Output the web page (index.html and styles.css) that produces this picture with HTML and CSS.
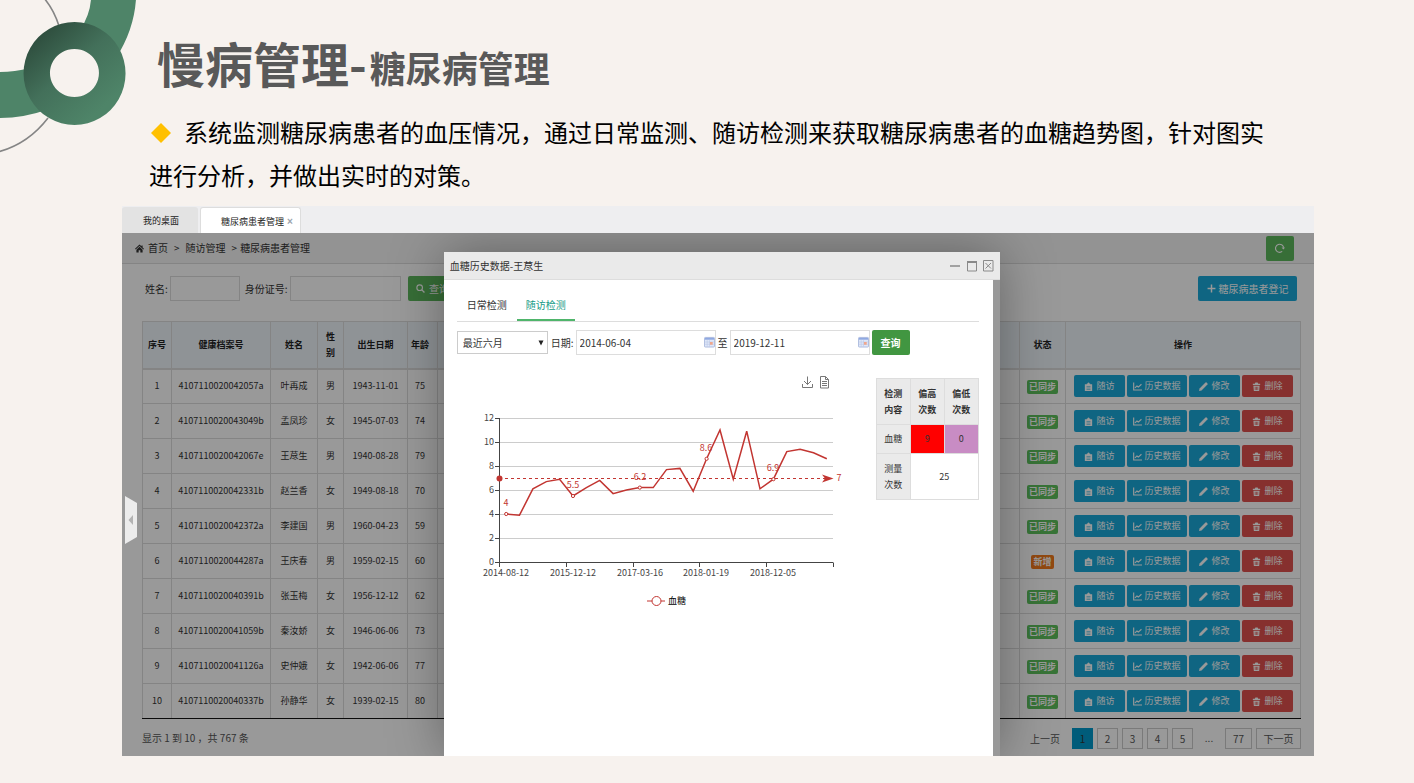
FILE: index.html
```html
<!DOCTYPE html>
<html lang="zh-CN">
<head>
<meta charset="utf-8">
<title>慢病管理-糖尿病管理</title>
<link rel="stylesheet" href="styles.css">
</head>
<body>
<svg class="sprite" aria-hidden="true">
  <symbol id="i-home" viewBox="0 0 16 16"><path d="M8 1 0 8.500l1.200 1.200L8 3.600l6.800 6.100L16 8.500 13.500 6.100V2.500h-2V4.200zM8 5 2.500 10v5h4v-4h3v4h4v-5z"/></symbol>
  <symbol id="i-search" viewBox="0 0 16 16"><circle cx="6.500" cy="6.500" r="5" fill="none" stroke="currentColor" stroke-width="2"/><path d="m10 10 5 5" stroke="currentColor" stroke-width="2.400"/></symbol>
  <symbol id="i-refresh" viewBox="0 0 16 16"><path d="M11.500 13.500a6.500 6.500 0 1 1 2.300-6" fill="none" stroke="currentColor" stroke-width="1.800"/><path d="M10.500 7h5.500l-2.600 3.500z"/></symbol>
  <symbol id="i-plus" viewBox="0 0 16 16"><path d="M6.700 1h2.600v5.700H15v2.600H9.300V15H6.700V9.300H1V6.700h5.700z"/></symbol>
  <symbol id="i-clip" viewBox="0 0 16 16"><path d="M1.500 4h3.500V2.500h1.500a1.500 1.500 0 0 1 3 0H11V4h3.500v12h-13zm3 3.500v1h7v-1zm0 2.500v1h7v-1zm0 2.500v1h7v-1z" fill-rule="evenodd"/></symbol>
  <symbol id="i-line" viewBox="0 0 16 16"><path d="M1.200 1v13.300H16M3.500 10.500 7 7l2.500 2L15 4" fill="none" stroke="currentColor" stroke-width="2"/></symbol>
  <symbol id="i-pen" viewBox="0 0 16 16"><path d="m0 16 1-4.500L11.500 1q1-1 2 0L15 2.500q1 1 0 2L4.500 15z"/></symbol>
  <symbol id="i-trash" viewBox="0 0 16 16"><path d="M1.500 3H5q.5-2 1.500-2h3q1 0 1.500 2h3.500v2.500h-13zM2.500 6.500h11l-.8 9.500H3.300zM5 8.500v5.500h1.200V8.500zm2.400 0v5.500h1.200V8.500zm2.400 0v5.500H11V8.500z" fill-rule="evenodd"/></symbol>
  <symbol id="i-cal" viewBox="0 0 12 12"><rect x=".5" y="1" width="11" height="10.500" rx="1" fill="#dfe7f8" stroke="#a9b8dc"/><path d="M1 1.500h10v2H1z" fill="#8fa9e2"/><path d="M3.500 4v7M6 4v7M1 6h10M1 8.500h10" stroke="#b9c6e6" stroke-width=".6"/><rect x="6.500" y="6" width="3" height="3" fill="#f0a68c"/></symbol>
</svg>

<main class="slide">
  <svg class="deco" viewBox="0 0 140 156" aria-hidden="true">
    <defs><linearGradient id="ring" x1="0.100" y1="0.100" x2="0.750" y2="0.850"><stop offset="0" stop-color="#2c4a3b"/><stop offset=".5" stop-color="#43705a"/><stop offset="1" stop-color="#4e8468"/></linearGradient></defs>
    <path d="M44 -2Q54 10 59 26M48 118Q28 144 -2 152" fill="none" stroke="#858585" stroke-width="1.600"/>
    <path d="M91 -1H136Q134 30 116 58L80 30Q90 15 91 -1zM-1 72Q14 72 30 68L46 110Q24 118 -1 118z" fill="#4e8468"/>
    <path d="M74.500 22a51 51.500 0 1 0 .1 0zm0 27a24.500 24 0 1 1-.1 0z" fill="url(#ring)" fill-rule="evenodd"/>
  </svg>
  <h1 class="title">慢病管理-<small>糖尿病管理</small></h1>
  <p class="lead"><svg class="diamond" viewBox="0 0 20 20" aria-hidden="true"><path d="M10 0 20 10 10 20 0 10z"/></svg>系统监测糖尿病患者的血压情况，通过日常监测、随访检测来获取糖尿病患者的血糖趋势图，针对图实进行分析，并做出实时的对策。</p>

  <section class="app">
    <nav class="tabs">
      <a class="tab" href="#">我的桌面</a>
      <a class="tab tab-on" href="#">糖尿病患者管理<span class="tab-x">×</span></a>
    </nav>
    <div class="stage">
      <div class="crumbs">
        <span class="trail"><svg class="ico ico-home"><use href="#i-home"/></svg><a href="#">首页</a><i>&gt;</i><a href="#">随访管理</a><i>&gt;</i></span><span>糖尿病患者管理</span>
        <button class="btn btn-green btn-refresh" aria-label="刷新"><svg class="ico"><use href="#i-refresh"/></svg></button>
      </div>
      <div class="panel">
        <form class="search">
          <label for="nm">姓名:</label><input id="nm" class="box box-name" type="text">
          <label for="idn">身份证号:</label><input id="idn" class="box box-id" type="text">
          <button type="button" class="btn btn-green btn-find"><svg class="ico"><use href="#i-search"/></svg>查询</button>
          <button type="button" class="btn btn-blue btn-new"><svg class="ico"><use href="#i-plus"/></svg>糖尿病患者登记</button>
        </form>
        <table class="grid">
          <colgroup><col class="c-no"><col class="c-file"><col class="c-name"><col class="c-sex"><col class="c-date"><col class="c-age"><col><col class="c-state"><col class="c-ops"></colgroup>
          <thead><tr><th>序号</th><th>健康档案号</th><th>姓名</th><th>性<br>别</th><th>出生日期</th><th>年龄</th><th></th><th>状态</th><th>操作</th></tr></thead>
          <tbody id="rows"></tbody>
        </table>
        <div class="foot">
          <span>显示 1 到 10 ，共 767 条</span>
          <nav class="pager"><span class="prev">上一页</span><a class="on" href="#">1</a><a href="#">2</a><a href="#">3</a><a href="#">4</a><a href="#">5</a><span class="dots">...</span><a class="wide" href="#">77</a><a class="next" href="#">下一页</a></nav>
        </div>
      </div>
      <div class="mask"></div>
      <button class="handle" aria-label="展开侧栏"><svg viewBox="0 0 12 48"><path d="M0 0 12 7V41L0 48z" fill="#ececec"/><path d="M8 19v10L3.500 24z" fill="#b3b3b3"/></svg></button>

      <div class="modal" role="dialog" aria-label="血糖历史数据">
        <header class="modal-head"><span>血糖历史数据-王荩生</span>
          <svg class="win" viewBox="0 0 44 12" fill="none" stroke="#8a8a8a" aria-hidden="true"><path d="M0 6h10" stroke-width="1.500"/><path d="M17.500 1v10h9V1M17 1.500h10"/><path d="M17 2h10" stroke-width="2"/><path d="M33.500 .5h9.500v10.500h-9.500zM35.500 3l5.500 5.500M41 3l-5.500 5.500"/></svg>
        </header>
        <div class="modal-body">
          <nav class="subtabs"><a href="#">日常检测</a><a class="on" href="#">随访检测</a></nav>
          <form class="range">
            <select class="box period" aria-label="时间段"><option>最近六月</option></select><svg class="caret" viewBox="0 0 6 6" aria-hidden="true"><path d="M.5 .5h5L3 5.500z"/></svg>
            <label for="d1">日期:</label>
            <span class="date"><input id="d1" class="box" type="text" value="2014-06-04"><svg class="cal"><use href="#i-cal"/></svg></span>
            <label for="d2">至</label>
            <span class="date"><input id="d2" class="box" type="text" value="2019-12-11"><svg class="cal"><use href="#i-cal"/></svg></span>
            <button type="button" class="btn btn-query">查询</button>
          </form>
          <div class="report">
            <svg class="chart" viewBox="0 0 400 250" role="img" aria-label="血糖趋势图">
              <g fill="none" stroke="#777">
                <path d="M345.500 14v3.500h10V14M350.500 6.500v8M347 11l3.500 3.500L354 11"/>
                <path d="M363.500 6.500h5l3 3v8.500h-8zM368.500 6.500v3h3M365 11.500h5M365 13.500h5M365 15.500h5"/>
              </g>
              <path d="M42 48.500h334M42 72.500h334M42 96.500h334M42 120.500h334M42 144.500h334M42 168.500h334" stroke="#ccc"/>
              <path d="M42.500 48v145M38 48.500h4M38 72.500h4M38 96.500h4M38 120.500h4M38 144.500h4M38 168.500h4M38 192.500h338.500M42.500 193v4M109.500 193v4M176.500 193v4M242.500 193v4M309.500 193v4M376.500 193v4" stroke="#444" fill="none"/>
              <g class="axis" text-anchor="end"><text x="37" y="51">12</text><text x="37" y="75">10</text><text x="37" y="99">8</text><text x="37" y="123">6</text><text x="37" y="147">4</text><text x="37" y="171">2</text><text x="37" y="195">0</text></g>
              <g class="axis" text-anchor="middle"><text x="49" y="206">2014-08-12</text><text x="116" y="206">2015-12-12</text><text x="183" y="206">2017-03-16</text><text x="249" y="206">2018-01-19</text><text x="316" y="206">2018-12-05</text></g>
              <path d="M42 108.500h330" stroke="#c23531" stroke-dasharray="3 3"/>
              <circle cx="42.500" cy="108.500" r="3" fill="#c23531"/>
              <path d="M376.500 108.500 365 104.500l3 4-3 4z" fill="#c23531"/>
              <polyline fill="none" stroke="#c23531" stroke-width="1.500" points="49.200,144 62.500,145.200 75.900,118.800 89.300,111.600 102.600,109.200 116,126 129.400,117.600 142.700,110.400 156.100,123.600 169.400,120 182.800,117.600 196.200,117.600 209.500,99.600 222.900,98.400 236.200,121.200 249.600,88.800 263,60 276.300,109.200 289.700,61.200 303,118.800 316.400,109.200 329.800,81.600 343.100,79.200 356.500,82.800 369.800,88.800"/>
              <g fill="#fff" stroke="#c23531"><circle cx="49.200" cy="144" r="1.600"/><circle cx="116" cy="126" r="1.600"/><circle cx="182.800" cy="117.600" r="1.600"/><circle cx="249.600" cy="88.800" r="1.600"/><circle cx="316.400" cy="109.200" r="1.600"/></g>
              <g class="val" text-anchor="middle"><text x="49" y="136">4</text><text x="116" y="118">5.5</text><text x="183" y="110">6.2</text><text x="249" y="81">8.6</text><text x="316" y="101">6.9</text><text x="382" y="111">7</text></g>
              <path d="M190 231h18" stroke="#c23531"/><circle cx="199.500" cy="231" r="4.500" fill="#fff" stroke="#c23531"/>
              <text class="legend" x="211" y="234">血糖</text>
            </svg>
            <table class="stats">
              <tr><th>检测<br>内容</th><th>偏高<br>次数</th><th>偏低<br>次数</th></tr>
              <tr class="mid"><th class="plain">血糖</th><td class="high">9</td><td class="low">0</td></tr>
              <tr><th class="plain">测量<br>次数</th><td colspan="2">25</td></tr>
            </table>
          </div>
        </div>
      </div>
    </div>
  </section>
</main>
<script src="app.js"></script>
</body>
</html>
```
FILE: app.js
```js
const patients = [
  ["4107110020042057a", "叶再成", "男", "1943-11-01", 75],
  ["4107110020043049b", "孟凤珍", "女", "1945-07-03", 74],
  ["4107110020042067e", "王荩生", "男", "1940-08-28", 79],
  ["4107110020042331b", "赵兰香", "女", "1949-08-18", 70],
  ["4107110020042372a", "李建国", "男", "1960-04-23", 59],
  ["4107110020044287a", "王庆春", "男", "1959-02-15", 60, true],
  ["4107110020040391b", "张玉梅", "女", "1956-12-12", 62],
  ["4107110020041059b", "秦汝娇", "女", "1946-06-06", 73],
  ["4107110020041126a", "史仲娥", "女", "1942-06-06", 77],
  ["4107110020040337b", "孙静华", "女", "1939-02-15", 80]
];
const op = (kind, icon, text) =>
  `<button class="btn op ${kind}"><svg class="ico"><use href="#${icon}"/></svg>${text}</button>`;
const ops = `<div class="ops">${op("btn-blue", "i-clip", "随访")}${op("btn-blue op-long", "i-line", "历史数据")}${op("btn-blue", "i-pen", "修改")}${op("btn-red", "i-trash", "删除")}</div>`;
document.getElementById("rows").innerHTML = patients.map((p, i) => {
  const cells = [i + 1, ...p.slice(0, 5), ""].map(v => `<td>${v}</td>`).join("");
  const tag = p[5] ? '<span class="tag tag-new">新增</span>' : '<span class="tag">已同步</span>';
  return `<tr>${cells}<td>${tag}</td><td>${ops}</td></tr>`;
}).join("");
```
FILE: styles.css
```css
* { box-sizing: border-box; }
body {
  margin: 0;
  background: #f7f2ee;
  color: #333;
  font: 10px/16px "Noto Sans CJK SC", "Noto Sans", sans-serif;
}
a { color: inherit; text-decoration: none; }
button, input, select { font: inherit; color: inherit; margin: 0; }
button { cursor: pointer; }
.sprite { position: absolute; width: 0; height: 0; }
.ico { width: 9px; height: 9px; fill: currentColor; flex: none; }

.slide { position: relative; padding: 28px 100px 27px 122px; }
.deco { position: absolute; left: 0; top: 0; width: 140px; height: 156px; }
.title { margin: 0 0 0 35px; color: #595959; font-size: 48px; line-height: 68px; font-weight: 700; }
.title small { margin-left: 3px; font-size: 36px; }
.lead { margin: 9px 36px 10px 27px; color: #000; font-size: 24px; line-height: 43px; }
.diamond { width: 20px; height: 20px; margin: 0 13px 0 2px; vertical-align: -1px; fill: #ffc000; }

.tabs { display: flex; gap: 2px; height: 27px; padding-top: 1px; background: #eeeef0; font-size: 9px; }
.tab { display: flex; align-items: center; padding: 2px 21px 0; background: #e3e3e3; border-radius: 3px 3px 0 0; color: #222; }
.tab-on { padding: 2px 9px 0 20px; background: #fff; border: 1px solid #ddd; border-bottom: 0; }
.tab:first-child { padding-right: 19px; }
.tab-x { margin-left: 3px; color: #9aa3ad; font: 700 10px/16px "Liberation Sans", sans-serif; }
.tab-on { padding-right: 7px; }

.stage { position: relative; overflow: hidden; background: #fff; }
.crumbs { display: flex; align-items: center; height: 31px; padding: 0 20px 0 13px; background: #f5f5f5; border-bottom: 1px solid #ddd; }
.trail { display: flex; align-items: center; }
.trail i { font-style: normal; margin: 0 6px; }
.trail i:last-child { margin-right: 3px; }
.ico-home { margin-right: 4px; }
.btn { display: inline-flex; align-items: center; justify-content: center; border: 0; border-radius: 2px; padding: 0; color: #fff; white-space: nowrap; }
.btn-green { background: #5cb85c; }
.btn-blue { background: #19a9d9; }
.btn-red { background: #e0504d; }
.btn-refresh { margin-left: auto; width: 28px; height: 25px; }
.btn-refresh .ico { width: 10px; height: 10px; }

.panel { padding: 12px 13px 7px 20px; }
.search { display: flex; align-items: center; margin: 0 4px 20px 3px; }
.box { height: 25px; padding: 0 4px; border: 1px solid #ddd; background: #fff; }
.box-name { width: 70px; margin: 0 5px 0 2px; }
.box-id { width: 111px; margin: 0 7px 0 2px; }
.btn-find { width: 56px; height: 25px; gap: 4px; padding-right: 6px; }
.btn-new { width: 99px; height: 25px; gap: 3px; margin-left: auto; }

.grid { width: 100%; table-layout: fixed; border-collapse: collapse; border-bottom: 1px solid #111; font-size: 9px; }
.grid th, .grid td { padding: 0; border: 1px solid #ddd; text-align: center; }
.grid th { height: 47px; background: #eff6fb; border-bottom-width: 2px; color: #222; }
.grid td { height: 35px; }
.grid tbody tr:last-child td { border-bottom: 1px solid #111; }
.grid td:nth-child(6), .grid th:nth-child(6) { padding-right: 5px; }
.c-no { width: 29px; } .c-file { width: 99px; } .c-name { width: 47px; } .c-sex { width: 26px; }
.c-date { width: 64px; } .c-age { width: 30px; } .c-state { width: 46px; } .c-ops { width: 235px; }
.tag { display: inline-block; padding: 0 2px; border-radius: 2px; background: #5ec25e; color: #fff; font-weight: 700; line-height: 14px; vertical-align: middle; }
.tag-new { background: #f37b1d; }
.ops { display: flex; gap: 2px; padding-left: 8px; }
.op { width: 51px; height: 22px; gap: 3px; }
.op-long { width: 60px; gap: 2px; }

.foot { display: flex; justify-content: space-between; align-items: flex-start; padding-top: 9px; color: #555; line-height: 19px; }
.pager { display: flex; gap: 4px; text-align: center; }
.pager a { min-width: 21px; border: 1px solid #ccc; }
.pager .on { background: #0099cc; border-color: #0099cc; color: #333; }
.pager .prev { padding: 1px 8px; }
.pager .dots { width: 24px; }
.pager .wide { width: 27px; }
.pager .next { width: 45px; }

.mask { position: absolute; inset: 0; background: rgba(0, 0, 0, .4); }
.handle { position: absolute; left: 3px; top: 263px; width: 12px; height: 48px; padding: 0; border: 0; background: none; }
.handle svg { display: block; }

.modal { position: absolute; left: 27%; top: 19px; bottom: 0; width: 556px; background: #fff; border-right: 7px solid #999; box-shadow: 0 0 50px rgba(0, 0, 0, .35); }
.modal-head { display: flex; align-items: center; justify-content: space-between; height: 28px; margin-right: -7px; padding: 0 6px; background: #eaeaea; border-bottom: 1px solid #ddd; }
.win { width: 44px; height: 12px; }
.modal-body { padding: 9px 14px 0 13px; }
.subtabs { display: flex; border-bottom: 1px solid #ddd; }
.subtabs a { padding: 8px 10px 6px; border-bottom: 2px solid transparent; }
.subtabs a.on { padding: 8px 9px 6px; color: #169b86; border-color: #4fb56b; }
.range { display: flex; align-items: center; margin-top: 8px; }
.period { width: 91px; height: 23px; margin-right: -10px; padding: 0 5px; border-color: #ccc; appearance: none; }
.caret { width: 6px; height: 6px; margin-right: 7px; fill: #222; pointer-events: none; }
.date { position: relative; display: flex; margin: 0 2px; }
.date .box { width: 140px; padding: 0 3px; }
.cal { position: absolute; right: 1px; top: 6px; width: 11px; height: 12px; }
.btn-query { width: 38px; height: 25px; background: #419641; font-weight: 700; }
.report { display: flex; align-items: flex-start; justify-content: space-between; padding-top: 15px; }
.chart { width: 400px; height: 250px; }
.chart text { font-size: 9px; }
.chart .axis { fill: #444; }
.chart .val { fill: #c23531; }
.stats { border-collapse: collapse; margin-top: 8px; font-size: 9px; text-align: center; }
.stats th, .stats td { width: 34px; height: 46px; padding: 0; border: 1px solid #ddd; }
.stats th { background: #eaeaea; }
.stats .mid th, .stats .mid td { height: 29px; }
.stats .plain { font-weight: 400; }
.stats .high { background: #f00; }
.stats .low { background: #c88cc4; }
```
